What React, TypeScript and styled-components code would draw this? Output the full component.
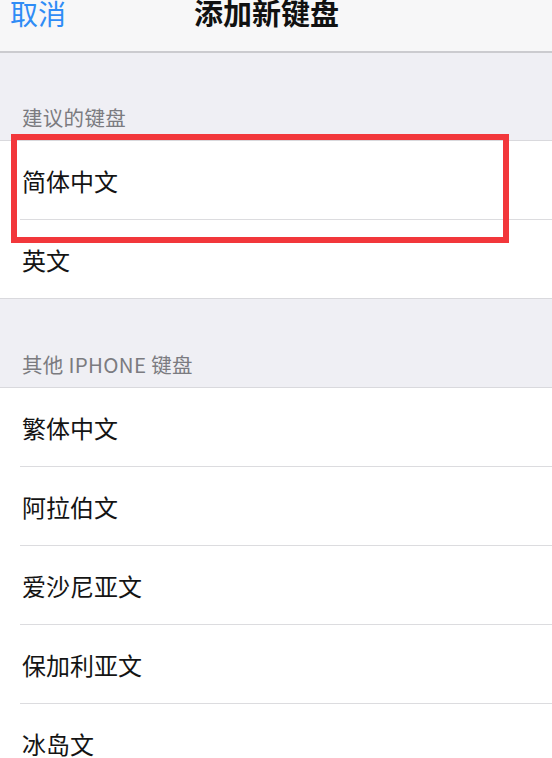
import React from "react";
import styled, { createGlobalStyle } from "styled-components";

const Global = createGlobalStyle`
  html, body { margin: 0; padding: 0; background: #efeff4; }
  body { font-family: "Noto Sans CJK SC", "Noto Sans", sans-serif; overflow: hidden; }
`;

const Page = styled.div`
  width: 552px;
  height: 758px;
  overflow: hidden;
  background: #efeff4;
`;

const NavBar = styled.div`
  height: 51px;
  background: #f7f7f8;
  border-bottom: 2px solid #cbcbcf;
  display: flex;
  align-items: flex-start;
  padding-left: 10px;
  gap: 128px;
  box-sizing: content-box;
`;

const NavButton = styled.span`
  font-size: 28px;
  line-height: 26px;
  color: #2f8cf6;
`;

const NavTitle = styled.span`
  font-size: 29px;
  line-height: 24px;
  font-weight: 700;
  color: #111;
`;

const SectionHeader = styled.div<{ $h: number }>`
  height: ${(p) => p.$h}px;
  display: flex;
  align-items: flex-end;
  padding: 0 0 12px 22px;
  box-sizing: border-box;
  font-size: 20.5px;
  line-height: 22px;
  letter-spacing: 0.3px;
  color: #7b7b80;
`;

const Group = styled.div`
  position: relative;
  background: #fff;
  border-top: 1px solid #d9d9dd;
  border-bottom: 1px solid #d9d9dd;
`;

const Row = styled.div`
  height: 78px;
  display: flex;
  align-items: center;
  padding-left: 22px;
  font-size: 24px;
  color: #141414;
  & + & {
    border-top: 1px solid #dcdcdf;
    margin-left: 20px;
    padding-left: 2px;
  }
`;

const Highlight = styled.div`
  position: absolute;
  left: 11px;
  top: -7px;
  width: 498px;
  height: 109px;
  box-sizing: border-box;
  border: 6px solid #f2373b;
  pointer-events: none;
`;

const suggested = ["简体中文", "英文"];
const others = ["繁体中文", "阿拉伯文", "爱沙尼亚文", "保加利亚文", "冰岛文"];

export default function App() {
  return (
    <Page>
      <Global />
      <NavBar>
        <NavButton>取消</NavButton>
        <NavTitle>添加新键盘</NavTitle>
      </NavBar>
      <SectionHeader $h={87}>建议的键盘</SectionHeader>
      <Group>
        {suggested.map((s) => (
          <Row key={s}>{s}</Row>
        ))}
        <Highlight />
      </Group>
      <SectionHeader $h={88}>其他 IPHONE 键盘</SectionHeader>
      <Group>
        {others.map((s) => (
          <Row key={s}>{s}</Row>
        ))}
      </Group>
    </Page>
  );
}
